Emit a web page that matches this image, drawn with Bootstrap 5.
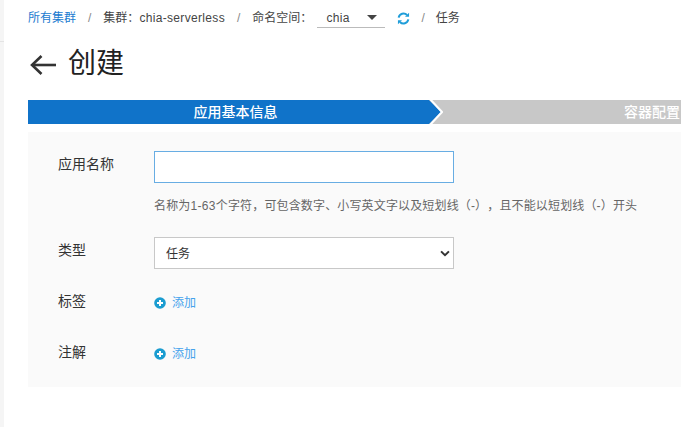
<!DOCTYPE html>
<html lang="zh">
<head>
<meta charset="utf-8">
<title>创建</title>
<link href="https://cdn.jsdelivr.net/npm/bootstrap@5.3.0/dist/css/bootstrap.min.css" rel="stylesheet">
<style>
html,body{height:100%;overflow:hidden}
body{font-family:"Liberation Sans","Noto Sans CJK SC",sans-serif;font-size:12px;color:#333;background:#fff;text-spacing-trim:space-all}
.shell{height:427px;width:681px;overflow:hidden}
.rail{width:4px;background:#f5f5f5;flex:none}
.rail-line{height:1px;margin-top:41px;background:#e4e4e4}
.page{padding-left:24px;min-width:0;flex:1}
.crumbs{height:36px;margin-bottom:5px;font-size:12px;color:#444;white-space:nowrap}
.crumbs a{color:#1b7bd0;text-decoration:none}
.sep{color:#888;margin:0 12px}
.sep-tight{margin:0 11px 0 11px}
.latin{letter-spacing:.33px}
.ns{width:68px;height:19px;border-bottom:1px solid #bbb;margin-left:5px;padding:0 9px;font-size:12px;flex:none}
.caret{border:5px solid transparent;border-top-color:#444;border-bottom:0;margin-right:-1px}
.refresh{margin-left:12px;flex:none}
.heading{height:59px}
.heading h1{font-size:28px;font-weight:400;color:#222;margin:1px 0 0;line-height:44px}
.backarrow{margin:12px 12px 0 1px;flex:none}
.stepbar{height:24px;width:653px;background:#c8c8c8;overflow:hidden}
.step-on{width:401px;padding-left:14px;background:#1073c9;color:#fff;font-weight:500;font-size:14px;flex:none}
.chev{width:14px;flex:none}
.step-off{color:#fff;font-weight:500;font-size:14px;white-space:nowrap;padding-left:181px}
.panel{margin-top:8px;height:255px;width:653px;background:#fafafa;padding:19px 30px}
.lbl{width:96px;font-size:14px;line-height:18px;margin-top:4px;flex:none;color:#333}
.fld{width:300px;height:32px;border:1px solid #c8c8c8;border-radius:0;font-size:12px;color:#333;box-shadow:none;background-color:#fff}
.fld-on{border-color:#68ade3}
.pick{padding:2px 11px 0;background-size:10px 7px;background-position:right 3px center;background-image:url("data:image/svg+xml,%3csvg xmlns='http://www.w3.org/2000/svg' viewBox='0 0 11 8'%3e%3cpath fill='none' stroke='%23333' stroke-width='2.2' d='M1 1.500l4.500 4.500 4.500-4.500'/%3e%3c/svg%3e")}
.tip{font-size:12px;line-height:18px;color:#666;margin-left:96px;margin-top:14px;margin-bottom:22px;white-space:nowrap;letter-spacing:.15px}
.add{color:#45a2ec;font-size:12px;text-decoration:none;margin-top:2px;gap:6px}
.addrow{height:51px}
.addrow .lbl{margin-top:0;margin-bottom:2px}
.first-add{margin-top:7px}
</style>
</head>
<body>
<div class="shell d-flex">
  <div class="rail"><div class="rail-line"></div></div>
  <div class="page">
    <div class="crumbs d-flex align-items-center">
      <a href="#">所有集群</a><span class="sep">/</span><span>集群：<span class="latin">chia-serverless</span></span><span class="sep">/</span><span>命名空间：</span>
      <div class="ns d-flex align-items-center justify-content-between"><span class="latin">chia</span><span class="caret"></span></div>
      <svg class="refresh" width="13" height="13" viewBox="0 0 14 14" fill="none" stroke="#1f9dd9" stroke-width="2.200"><path d="M1.800 6A5.300 5.300 0 0 1 10.800 3.300"/><path d="M12.200 8A5.300 5.300 0 0 1 3.200 10.700"/><path d="M13 .8V5.200H8.600Z" fill="#1f9dd9" stroke="none"/><path d="M1 13.200V8.800H5.400Z" fill="#1f9dd9" stroke="none"/></svg>
      <span class="sep sep-tight">/</span><span>任务</span>
    </div>
    <div class="heading d-flex align-items-start">
      <svg class="backarrow" width="27" height="24" viewBox="0 0 27 24" fill="none" stroke="#333" stroke-width="2.600"><path d="M27 12H3"/><path d="M12.500 3L3 12l9.500 9"/></svg>
      <h1>创建</h1>
    </div>
    <div class="stepbar d-flex">
      <div class="step-on d-flex align-items-center justify-content-center">应用基本信息</div>
      <svg class="chev" viewBox="0 0 14 24" preserveAspectRatio="none"><path d="M0 0L12 12L0 24Z" fill="#1073c9"/><path d="M1 -1L13 12L1 25" fill="none" stroke="#fff" stroke-width="2"/></svg>
      <div class="step-off d-flex align-items-center">容器配置</div>
    </div>
    <div class="panel">
      <div class="d-flex align-items-start">
        <label class="lbl" for="appname">应用名称</label>
        <input id="appname" class="form-control fld fld-on" type="text">
      </div>
      <div class="tip">名称为<span class="latin">1-63</span>个字符，可包含数字、小写英文字以及短划线（-），且不能以短划线（-）开头</div>
      <div class="d-flex align-items-start">
        <label class="lbl" for="apptype">类型</label>
        <select id="apptype" class="form-select fld pick"><option>任务</option></select>
      </div>
      <div class="addrow first-add d-flex align-items-center">
        <span class="lbl">标签</span>
        <a class="add d-flex align-items-center" href="#"><svg width="12" height="12" viewBox="0 0 12 12"><circle cx="6" cy="6" r="5.800" fill="#1a9cd0"/><path d="M6 3v6M3 6h6" stroke="#fff" stroke-width="2"/></svg><span>添加</span></a>
      </div>
      <div class="addrow d-flex align-items-center">
        <span class="lbl">注解</span>
        <a class="add d-flex align-items-center" href="#"><svg width="12" height="12" viewBox="0 0 12 12"><circle cx="6" cy="6" r="5.800" fill="#1a9cd0"/><path d="M6 3v6M3 6h6" stroke="#fff" stroke-width="2"/></svg><span>添加</span></a>
      </div>
    </div>
  </div>
</div>
<script src="https://cdn.jsdelivr.net/npm/bootstrap@5.3.0/dist/js/bootstrap.bundle.min.js"></script>
</body>
</html>
